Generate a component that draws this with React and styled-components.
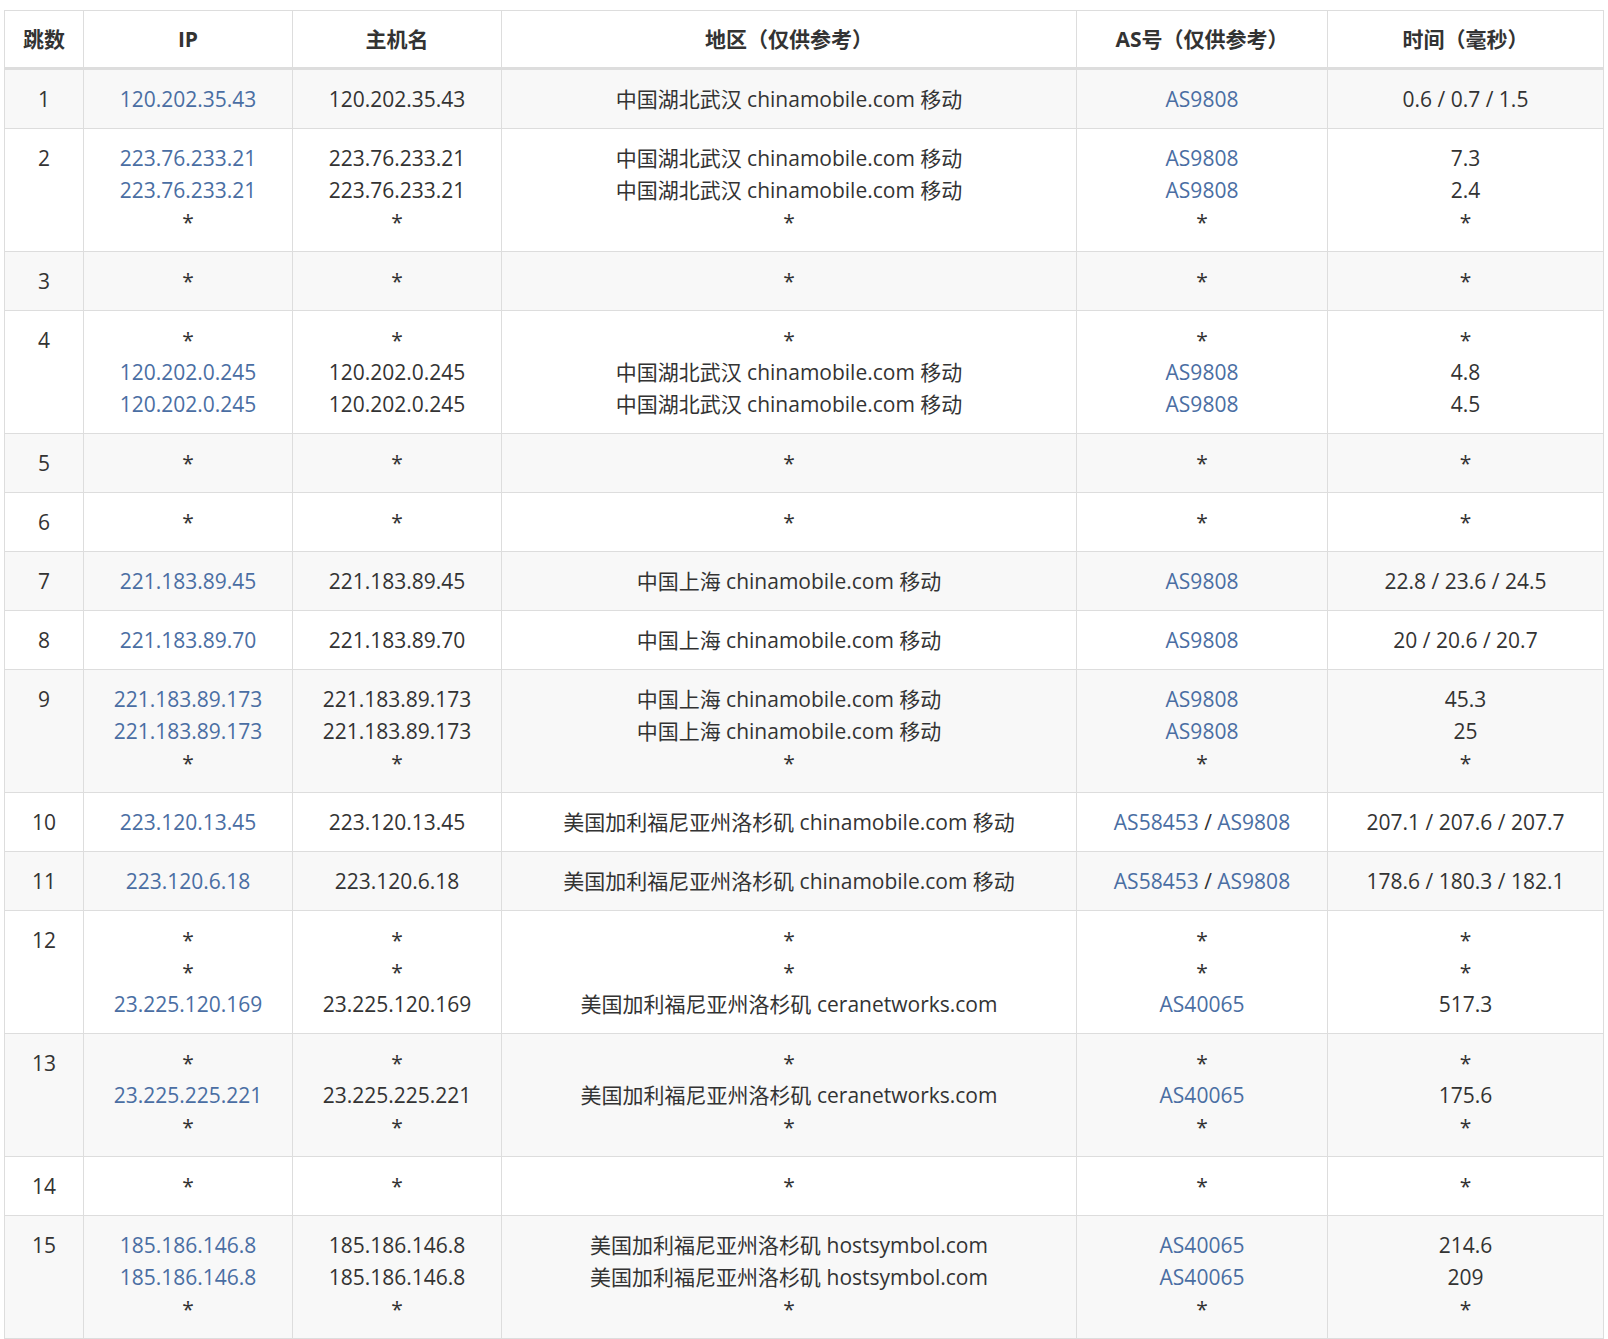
import React from "react";
import styled, { createGlobalStyle } from "styled-components";

const Global = createGlobalStyle`
  body { margin: 0; background: #fff; font-family: "Open Sans", "Noto Sans CJK SC", sans-serif; color: #333; }
`;
const Wrap = styled.div` padding: 10px 5px 4px 4px; `;
const Table = styled.table`
  border-collapse: collapse; table-layout: fixed; width: 1599px;
  font-size: 21px; line-height: 32px;
`;
const Th = styled.th`
  border: 1px solid #dddddd; border-bottom: 3px solid #dddddd;
  font-weight: 700; height: 56px; padding: 0 8px; text-align: center; color: #333;
`;
const Tr = styled.tr` background: ${p => (p.$alt ? "#f8f8f8" : "#fff")}; `;
const Td = styled.td`
  border: 1px solid #dddddd; padding: 13px 8px; text-align: center; vertical-align: top; white-space: nowrap;
`;
const Link = styled.span` color: #4a6ea3; `;
const Line = styled.div``;

const S = "*";
const cm = r => `${r} chinamobile.com 移动`;
const WH = "中国湖北武汉", SH = "中国上海", LA = "美国加利福尼亚州洛杉矶";
const data = [
  [["120.202.35.43"], ["120.202.35.43"], [cm(WH)], ["AS9808"], ["0.6 / 0.7 / 1.5"]],
  [["223.76.233.21", "223.76.233.21", S], ["223.76.233.21", "223.76.233.21", S], [cm(WH), cm(WH), S], ["AS9808", "AS9808", S], ["7.3", "2.4", S]],
  [[S], [S], [S], [S], [S]],
  [[S, "120.202.0.245", "120.202.0.245"], [S, "120.202.0.245", "120.202.0.245"], [S, cm(WH), cm(WH)], [S, "AS9808", "AS9808"], [S, "4.8", "4.5"]],
  [[S], [S], [S], [S], [S]],
  [[S], [S], [S], [S], [S]],
  [["221.183.89.45"], ["221.183.89.45"], [cm(SH)], ["AS9808"], ["22.8 / 23.6 / 24.5"]],
  [["221.183.89.70"], ["221.183.89.70"], [cm(SH)], ["AS9808"], ["20 / 20.6 / 20.7"]],
  [["221.183.89.173", "221.183.89.173", S], ["221.183.89.173", "221.183.89.173", S], [cm(SH), cm(SH), S], ["AS9808", "AS9808", S], ["45.3", "25", S]],
  [["223.120.13.45"], ["223.120.13.45"], [cm(LA)], ["AS58453 / AS9808"], ["207.1 / 207.6 / 207.7"]],
  [["223.120.6.18"], ["223.120.6.18"], [cm(LA)], ["AS58453 / AS9808"], ["178.6 / 180.3 / 182.1"]],
  [[S, S, "23.225.120.169"], [S, S, "23.225.120.169"], [S, S, `${LA} ceranetworks.com`], [S, S, "AS40065"], [S, S, "517.3"]],
  [[S, "23.225.225.221", S], [S, "23.225.225.221", S], [S, `${LA} ceranetworks.com`, S], [S, "AS40065", S], [S, "175.6", S]],
  [[S], [S], [S], [S], [S]],
  [["185.186.146.8", "185.186.146.8", S], ["185.186.146.8", "185.186.146.8", S], [`${LA} hostsymbol.com`, `${LA} hostsymbol.com`, S], ["AS40065", "AS40065", S], ["214.6", "209", S]],
];

function AsCell({ v }) {
  if (v === S) return S;
  const parts = v.split(" / ");
  return parts.map((p, i) => (
    <React.Fragment key={i}>{i > 0 && " / "}<Link>{p}</Link></React.Fragment>
  ));
}

export default function App() {
  const widths = [79, 209, 209, 575, 251, 276];
  return (
    <Wrap>
      <Global />
      <Table>
        <colgroup>{widths.map((w, i) => <col key={i} style={{ width: w }} />)}</colgroup>
        <thead>
          <tr>
            {["跳数", "IP", "主机名", "地区（仅供参考）", "AS号（仅供参考）", "时间（毫秒）"].map(h => <Th key={h}>{h}</Th>)}
          </tr>
        </thead>
        <tbody>
          {data.map((row, i) => (
            <Tr key={i} $alt={i % 2 === 0}>
              <Td>{i + 1}</Td>
              <Td>{row[0].map((v, j) => <Line key={j}>{v === S ? S : <Link>{v}</Link>}</Line>)}</Td>
              <Td>{row[1].map((v, j) => <Line key={j}>{v}</Line>)}</Td>
              <Td>{row[2].map((v, j) => <Line key={j}>{v}</Line>)}</Td>
              <Td>{row[3].map((v, j) => <Line key={j}><AsCell v={v} /></Line>)}</Td>
              <Td>{row[4].map((v, j) => <Line key={j}>{v}</Line>)}</Td>
            </Tr>
          ))}
        </tbody>
      </Table>
    </Wrap>
  );
}
